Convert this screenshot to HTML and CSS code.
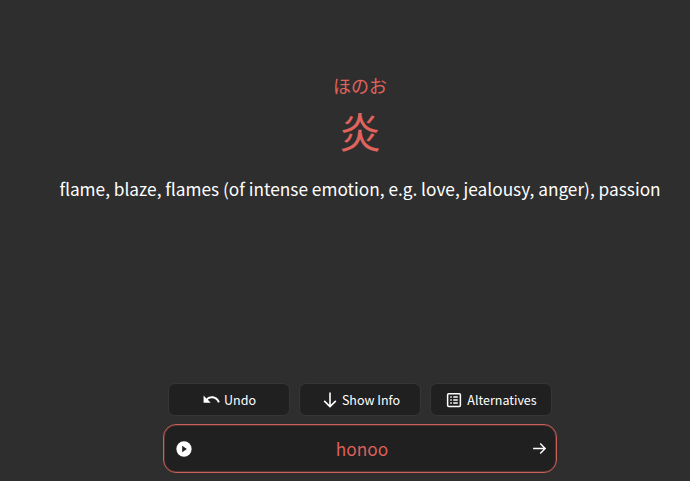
FILE: index.html
```html
<!DOCTYPE html>
<html lang="en">
<head>
  <meta charset="UTF-8" />
  <meta name="viewport" content="width=device-width, initial-scale=1.0">
  <title>Review</title>
  <link rel="stylesheet" href="styles.css">
</head>
<body>

  <main class="card">
    <div class="reading" lang="ja">ほのお</div>
    <div class="kanji" lang="ja">炎</div>
    <div class="meaning">flame, blaze, flames (of intense emotion, e.g. love, jealousy, anger), passion</div>
  </main>

  <div class="actions">
    <button class="action undo">
      <svg viewBox="0 0 24 24" class="icon"><path d="M12.5 8c-2.65 0-5.05 1-6.9 2.6L2 7v9h9l-3.62-3.62c1.39-1.16 3.16-1.88 5.12-1.88 3.54 0 6.55 2.31 7.6 5.5l2.37-.78C21.08 11.03 17.15 8 12.5 8z" fill="currentColor"/></svg>
      Undo
    </button>
    <button class="action info">
      <svg viewBox="0 0 24 24" class="icon"><path d="M12 3v17M5 13l7 7 7-7" fill="none" stroke="currentColor" stroke-width="1.9"/></svg>
      Show Info
    </button>
    <button class="action alt">
      <svg viewBox="0 0 24 24" class="icon"><rect x="3.5" y="3.5" width="17" height="17" rx="1.5" fill="none" stroke="currentColor" stroke-width="2"/><path d="M7 8h2M11 8h6M7 12h2M11 12h6M7 16h2M11 16h6" stroke="currentColor" stroke-width="1.8"/></svg>
      Alternatives
    </button>
  </div>

  <div class="answer">
    <svg viewBox="0 0 20 20" class="play"><circle cx="10" cy="10" r="8.5" fill="#fff"/><path d="M8 6.5l5.2 3.5L8 13.5z" fill="#202020"/></svg>
    <span class="answer-text">honoo</span>
    <svg viewBox="0 0 24 24" class="next"><path d="M3 12h17M13 5l7 7-7 7" fill="none" stroke="currentColor" stroke-width="2"/></svg>
  </div>

</body>
</html>
```

FILE: styles.css
```css
* {
  box-sizing: border-box;
}

body {
  margin: 0;
  height: 100vh;
  overflow: hidden;
  padding-left: 30px;
  display: flex;
  flex-direction: column;
  align-items: center;
  font-family: "Noto Sans CJK JP", "Noto Sans", sans-serif;
  background: #2e2e2e;
  color: #fff;
}

.card {
  flex: 1;
  width: 100%;
  padding-top: 71px;
  text-align: center;
}

.reading {
  font-size: 18px;
  line-height: 28px;
  color: #e0635c;
}

.kanji {
  font-size: 42px;
  line-height: 60px;
  margin-top: 1px;
  color: #e0635c;
}

.meaning {
  font-size: 17.25px;
  line-height: 28px;
  margin-top: 15px;
}

.actions {
  display: flex;
  gap: 9px;
  margin-bottom: 8px;
}

.action {
  width: 122px;
  height: 33px;
  display: flex;
  align-items: center;
  justify-content: center;
  gap: 4px;
  font: inherit;
  font-size: 12.5px;
  color: #fff;
  background: #202020;
  border: 1px solid #363636;
  border-radius: 7px;
}

.icon {
  width: 18px;
  height: 18px;
}

.undo {
  gap: 3px;
}

.undo .icon {
  width: 19px;
  height: 19px;
}

.info {
  gap: 2px;
}

.info .icon {
  width: 20px;
  height: 20px;
}

.answer {
  width: 394px;
  height: 49px;
  margin-bottom: 8px;
  padding: 0 8px 0 11px;
  display: flex;
  align-items: center;
  background: #202020;
  border: 1px solid #c9605a;
  border-radius: 13px;
  box-shadow: inset 0 0 0 1px rgba(201, 96, 90, 0.3);
}

.play {
  width: 18px;
  height: 18px;
}

.answer-text {
  flex: 1;
  text-align: center;
  font-size: 17.25px;
  color: #dc615a;
}

.next {
  width: 17px;
  height: 17px;
  color: #fff;
}
```
